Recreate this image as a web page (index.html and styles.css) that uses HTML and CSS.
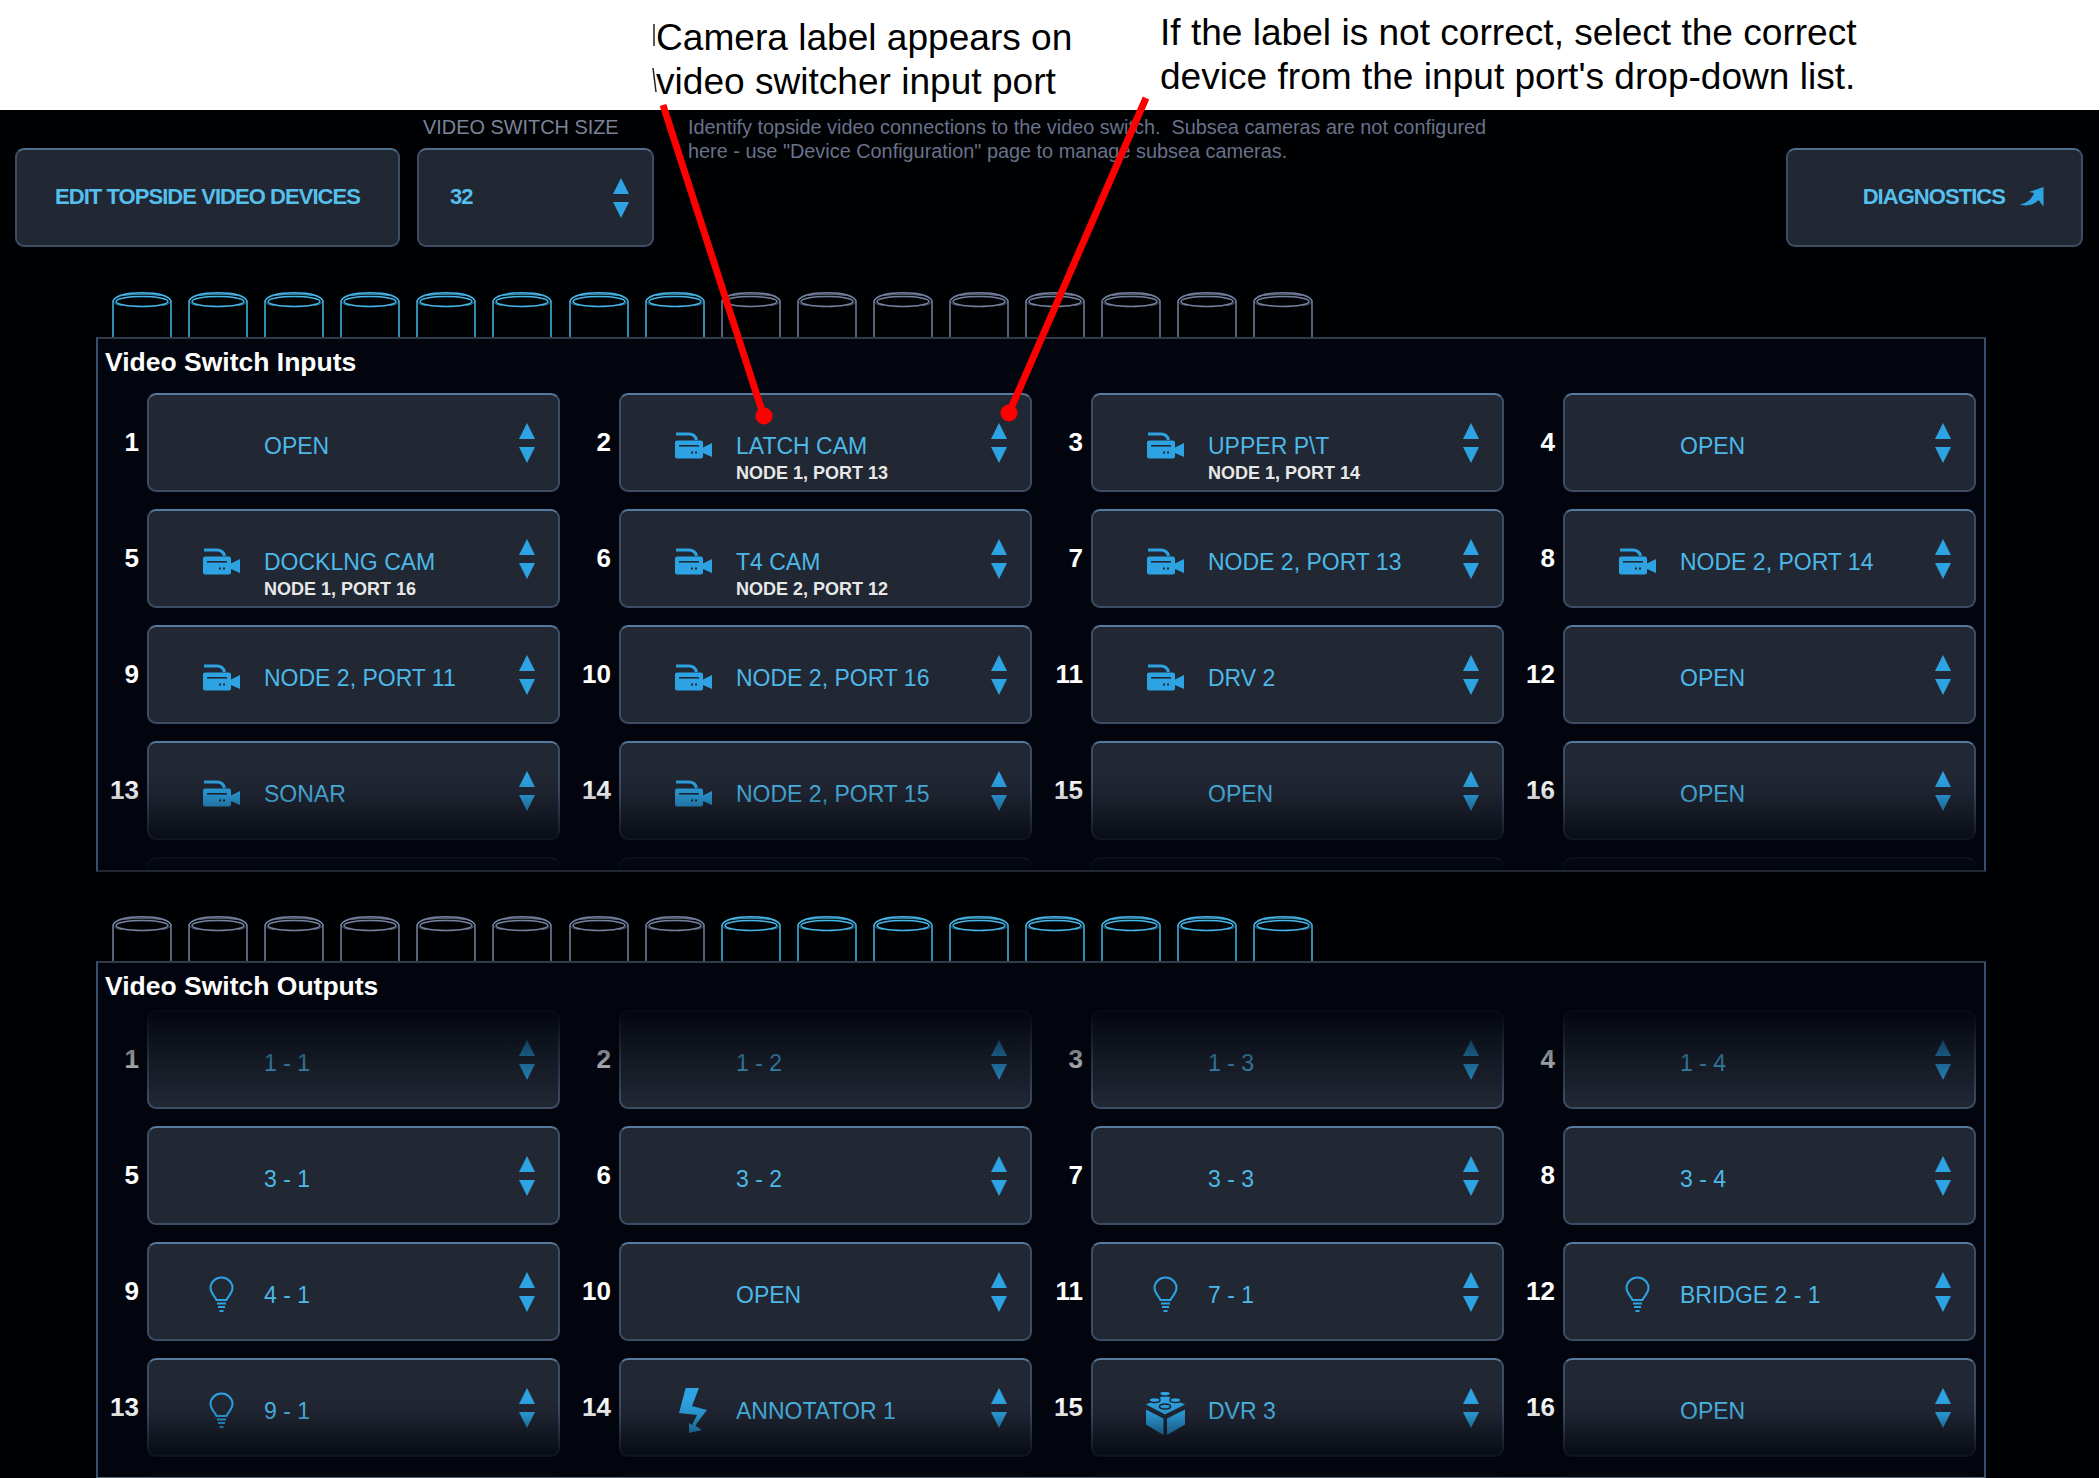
FILE: index.html
```html
<!DOCTYPE html>
<html lang="en">
<head>
<meta charset="utf-8">
<title>Video Switch</title>
<link rel="stylesheet" href="styles.css">
</head>
<body>
<svg class="defs" width="0" height="0" aria-hidden="true">
  <symbol id="cam" viewBox="0 0 37 27">
    <path d="M1 2H14Q20 2 21.5 8" fill="none" stroke="currentColor" stroke-width="3"/>
    <rect x="0" y="8.5" width="28" height="18" rx="2" fill="currentColor"/>
    <rect x="4" y="13" width="20" height="1.6" fill="#212733"/>
    <rect x="16" y="19.5" width="2" height="2" fill="#212733"/>
    <rect x="20" y="19.5" width="2" height="2" fill="#212733"/>
    <path d="M28 15.5L37 11V25L28 21Z" fill="currentColor"/>
  </symbol>
  <symbol id="bulb" viewBox="0 0 25 37">
    <path d="M12.5 1.5C6 1.5 1.5 6.500 1.500 12C1.500 17 5.500 19.500 7.500 24H17.500C19.500 19.500 23.500 17 23.500 12C23.500 6.500 19 1.500 12.500 1.500Z" fill="none" stroke="currentColor" stroke-width="2"/>
    <path d="M8 27.500H17M9 31H16M10.500 35H14.500" fill="none" stroke="currentColor" stroke-width="2"/>
  </symbol>
  <symbol id="bolt" viewBox="0 0 28 45">
    <path d="M6.700 0H20L13 18L28 22L18 35L16.700 38L23 42L10 45V35L13 37L18 27L0 25Z" fill="currentColor"/>
  </symbol>
  <symbol id="lego" viewBox="0 0 39 44">
    <path d="M0 13.500L19 4L39 13.500L19 23.500Z" fill="currentColor"/>
    <path d="M0 18.500L17.500 27.500V44L0 33.500ZM21 27.500L39 18.500V33.500L21 44Z" fill="currentColor"/>
    <g fill="currentColor" stroke="#1e2530" stroke-width="1.500">
      <ellipse cx="19" cy="2.500" rx="5.500" ry="2.500"/>
      <ellipse cx="8.500" cy="9" rx="5.500" ry="2.500"/>
      <ellipse cx="29.500" cy="9" rx="5.500" ry="2.500"/>
      <ellipse cx="19" cy="15.500" rx="5.500" ry="2.500"/>
    </g>
  </symbol>
  <symbol id="jump" viewBox="0 0 24 20">
    <path d="M23.500 0V19.500L18.500 13C15 17 8 20 0 17.500C7 16 12 12 14 6L9 5Z" fill="currentColor"/>
  </symbol>
  <symbol id="cyl" viewBox="0 0 60 45">
    <path d="M1 45V9C3 4 14 .8 30 .8S57 4 59 9V45" fill="none" stroke="currentColor" stroke-width="1.500"/>
    <path d="M11 3.500C20 1.800 40 1.800 49 3.500" fill="none" stroke="currentColor" stroke-width="1.500" opacity=".7"/>
    <ellipse cx="30" cy="9.500" rx="26" ry="5" fill="none" stroke="currentColor" stroke-width="1.500"/>
    <path d="M1 9C2 12 6 13 10 13.500" fill="none" stroke="currentColor" stroke-width="1" opacity=".7"/>
    <path d="M59 9C58 12 54 13 50 13.500" fill="none" stroke="currentColor" stroke-width="1" opacity=".7"/>
  </symbol>
</svg>

<div class="page">
  <header class="notes">
    <p class="note note-left">Camera label appears on<br>video switcher input port</p>
    <p class="note note-right">If the label is not correct, select the correct<br>device from the input port's drop-down list.</p>
  </header>

  <main class="dark">
    <section class="toolbar">
      <button class="btn btn-edit">EDIT TOPSIDE VIDEO DEVICES</button>
      <div class="size">
        <div class="size-label">VIDEO SWITCH SIZE</div>
        <div class="btn pick"><span>32</span><span class="arr"><i class="up"></i><i class="down"></i></span></div>
      </div>
      <p class="help">Identify topside video connections to the video switch.&nbsp; Subsea cameras are not configured<br>here - use "Device Configuration" page to manage subsea cameras.</p>
      <button class="btn btn-diag">DIAGNOSTICS<svg class="ic-jump"><use href="#jump"/></svg></button>
    </section>

    <div class="plugs">
      <svg class="plug on"><use href="#cyl"/></svg><svg class="plug on"><use href="#cyl"/></svg><svg class="plug on"><use href="#cyl"/></svg><svg class="plug on"><use href="#cyl"/></svg>
      <svg class="plug on"><use href="#cyl"/></svg><svg class="plug on"><use href="#cyl"/></svg><svg class="plug on"><use href="#cyl"/></svg><svg class="plug on"><use href="#cyl"/></svg>
      <svg class="plug"><use href="#cyl"/></svg><svg class="plug"><use href="#cyl"/></svg><svg class="plug"><use href="#cyl"/></svg><svg class="plug"><use href="#cyl"/></svg>
      <svg class="plug"><use href="#cyl"/></svg><svg class="plug"><use href="#cyl"/></svg><svg class="plug"><use href="#cyl"/></svg><svg class="plug"><use href="#cyl"/></svg>
    </div>

    <section class="panel panel-in">
      <h2 class="title">Video Switch Inputs</h2>
      <div class="ports">
        <div class="port"><b class="num">1</b><div class="sel"><span class="slot"></span><div class="txt"><div class="lbl">OPEN</div></div><span class="arr"><i class="up"></i><i class="down"></i></span></div></div>
        <div class="port"><b class="num">2</b><div class="sel"><span class="slot"><svg class="ic-cam"><use href="#cam"/></svg></span><div class="txt"><div class="lbl">LATCH CAM</div><div class="sub">NODE 1, PORT 13</div></div><span class="arr"><i class="up"></i><i class="down"></i></span></div></div>
        <div class="port"><b class="num">3</b><div class="sel"><span class="slot"><svg class="ic-cam"><use href="#cam"/></svg></span><div class="txt"><div class="lbl">UPPER P\T</div><div class="sub">NODE 1, PORT 14</div></div><span class="arr"><i class="up"></i><i class="down"></i></span></div></div>
        <div class="port"><b class="num">4</b><div class="sel"><span class="slot"></span><div class="txt"><div class="lbl">OPEN</div></div><span class="arr"><i class="up"></i><i class="down"></i></span></div></div>

        <div class="port"><b class="num">5</b><div class="sel"><span class="slot"><svg class="ic-cam"><use href="#cam"/></svg></span><div class="txt"><div class="lbl">DOCKLNG CAM</div><div class="sub">NODE 1, PORT 16</div></div><span class="arr"><i class="up"></i><i class="down"></i></span></div></div>
        <div class="port"><b class="num">6</b><div class="sel"><span class="slot"><svg class="ic-cam"><use href="#cam"/></svg></span><div class="txt"><div class="lbl">T4 CAM</div><div class="sub">NODE 2, PORT 12</div></div><span class="arr"><i class="up"></i><i class="down"></i></span></div></div>
        <div class="port"><b class="num">7</b><div class="sel"><span class="slot"><svg class="ic-cam"><use href="#cam"/></svg></span><div class="txt"><div class="lbl">NODE 2, PORT 13</div></div><span class="arr"><i class="up"></i><i class="down"></i></span></div></div>
        <div class="port"><b class="num">8</b><div class="sel"><span class="slot"><svg class="ic-cam"><use href="#cam"/></svg></span><div class="txt"><div class="lbl">NODE 2, PORT 14</div></div><span class="arr"><i class="up"></i><i class="down"></i></span></div></div>

        <div class="port"><b class="num">9</b><div class="sel"><span class="slot"><svg class="ic-cam"><use href="#cam"/></svg></span><div class="txt"><div class="lbl">NODE 2, PORT 11</div></div><span class="arr"><i class="up"></i><i class="down"></i></span></div></div>
        <div class="port"><b class="num">10</b><div class="sel"><span class="slot"><svg class="ic-cam"><use href="#cam"/></svg></span><div class="txt"><div class="lbl">NODE 2, PORT 16</div></div><span class="arr"><i class="up"></i><i class="down"></i></span></div></div>
        <div class="port"><b class="num">11</b><div class="sel"><span class="slot"><svg class="ic-cam"><use href="#cam"/></svg></span><div class="txt"><div class="lbl">DRV 2</div></div><span class="arr"><i class="up"></i><i class="down"></i></span></div></div>
        <div class="port"><b class="num">12</b><div class="sel"><span class="slot"></span><div class="txt"><div class="lbl">OPEN</div></div><span class="arr"><i class="up"></i><i class="down"></i></span></div></div>

        <div class="port"><b class="num">13</b><div class="sel"><span class="slot"><svg class="ic-cam"><use href="#cam"/></svg></span><div class="txt"><div class="lbl">SONAR</div></div><span class="arr"><i class="up"></i><i class="down"></i></span></div></div>
        <div class="port"><b class="num">14</b><div class="sel"><span class="slot"><svg class="ic-cam"><use href="#cam"/></svg></span><div class="txt"><div class="lbl">NODE 2, PORT 15</div></div><span class="arr"><i class="up"></i><i class="down"></i></span></div></div>
        <div class="port"><b class="num">15</b><div class="sel"><span class="slot"></span><div class="txt"><div class="lbl">OPEN</div></div><span class="arr"><i class="up"></i><i class="down"></i></span></div></div>
        <div class="port"><b class="num">16</b><div class="sel"><span class="slot"></span><div class="txt"><div class="lbl">OPEN</div></div><span class="arr"><i class="up"></i><i class="down"></i></span></div></div>

        <div class="port"><b class="num"></b><div class="sel"></div></div>
        <div class="port"><b class="num"></b><div class="sel"></div></div>
        <div class="port"><b class="num"></b><div class="sel"></div></div>
        <div class="port"><b class="num"></b><div class="sel"></div></div>
      </div>
    </section>

    <div class="plugs">
      <svg class="plug"><use href="#cyl"/></svg><svg class="plug"><use href="#cyl"/></svg><svg class="plug"><use href="#cyl"/></svg><svg class="plug"><use href="#cyl"/></svg>
      <svg class="plug"><use href="#cyl"/></svg><svg class="plug"><use href="#cyl"/></svg><svg class="plug"><use href="#cyl"/></svg><svg class="plug"><use href="#cyl"/></svg>
      <svg class="plug on"><use href="#cyl"/></svg><svg class="plug on"><use href="#cyl"/></svg><svg class="plug on"><use href="#cyl"/></svg><svg class="plug on"><use href="#cyl"/></svg>
      <svg class="plug on"><use href="#cyl"/></svg><svg class="plug on"><use href="#cyl"/></svg><svg class="plug on"><use href="#cyl"/></svg><svg class="plug on"><use href="#cyl"/></svg>
    </div>

    <section class="panel panel-out">
      <h2 class="title">Video Switch Outputs</h2>
      <div class="ports">
        <div class="port"><b class="num">1</b><div class="sel"><span class="slot"></span><div class="txt"><div class="lbl">1 - 1</div></div><span class="arr"><i class="up"></i><i class="down"></i></span></div></div>
        <div class="port"><b class="num">2</b><div class="sel"><span class="slot"></span><div class="txt"><div class="lbl">1 - 2</div></div><span class="arr"><i class="up"></i><i class="down"></i></span></div></div>
        <div class="port"><b class="num">3</b><div class="sel"><span class="slot"></span><div class="txt"><div class="lbl">1 - 3</div></div><span class="arr"><i class="up"></i><i class="down"></i></span></div></div>
        <div class="port"><b class="num">4</b><div class="sel"><span class="slot"></span><div class="txt"><div class="lbl">1 - 4</div></div><span class="arr"><i class="up"></i><i class="down"></i></span></div></div>

        <div class="port"><b class="num">5</b><div class="sel"><span class="slot"></span><div class="txt"><div class="lbl">3 - 1</div></div><span class="arr"><i class="up"></i><i class="down"></i></span></div></div>
        <div class="port"><b class="num">6</b><div class="sel"><span class="slot"></span><div class="txt"><div class="lbl">3 - 2</div></div><span class="arr"><i class="up"></i><i class="down"></i></span></div></div>
        <div class="port"><b class="num">7</b><div class="sel"><span class="slot"></span><div class="txt"><div class="lbl">3 - 3</div></div><span class="arr"><i class="up"></i><i class="down"></i></span></div></div>
        <div class="port"><b class="num">8</b><div class="sel"><span class="slot"></span><div class="txt"><div class="lbl">3 - 4</div></div><span class="arr"><i class="up"></i><i class="down"></i></span></div></div>

        <div class="port"><b class="num">9</b><div class="sel"><span class="slot"><svg class="ic-bulb"><use href="#bulb"/></svg></span><div class="txt"><div class="lbl">4 - 1</div></div><span class="arr"><i class="up"></i><i class="down"></i></span></div></div>
        <div class="port"><b class="num">10</b><div class="sel"><span class="slot"></span><div class="txt"><div class="lbl">OPEN</div></div><span class="arr"><i class="up"></i><i class="down"></i></span></div></div>
        <div class="port"><b class="num">11</b><div class="sel"><span class="slot"><svg class="ic-bulb"><use href="#bulb"/></svg></span><div class="txt"><div class="lbl">7 - 1</div></div><span class="arr"><i class="up"></i><i class="down"></i></span></div></div>
        <div class="port"><b class="num">12</b><div class="sel"><span class="slot"><svg class="ic-bulb"><use href="#bulb"/></svg></span><div class="txt"><div class="lbl">BRIDGE 2 - 1</div></div><span class="arr"><i class="up"></i><i class="down"></i></span></div></div>

        <div class="port"><b class="num">13</b><div class="sel"><span class="slot"><svg class="ic-bulb"><use href="#bulb"/></svg></span><div class="txt"><div class="lbl">9 - 1</div></div><span class="arr"><i class="up"></i><i class="down"></i></span></div></div>
        <div class="port"><b class="num">14</b><div class="sel"><span class="slot"><svg class="ic-bolt"><use href="#bolt"/></svg></span><div class="txt"><div class="lbl">ANNOTATOR 1</div></div><span class="arr"><i class="up"></i><i class="down"></i></span></div></div>
        <div class="port"><b class="num">15</b><div class="sel"><span class="slot"><svg class="ic-lego"><use href="#lego"/></svg></span><div class="txt"><div class="lbl">DVR 3</div></div><span class="arr"><i class="up"></i><i class="down"></i></span></div></div>
        <div class="port"><b class="num">16</b><div class="sel"><span class="slot"></span><div class="txt"><div class="lbl">OPEN</div></div><span class="arr"><i class="up"></i><i class="down"></i></span></div></div>

        <div class="port"><b class="num"></b><div class="sel"></div></div>
        <div class="port"><b class="num"></b><div class="sel"></div></div>
        <div class="port"><b class="num"></b><div class="sel"></div></div>
        <div class="port"><b class="num"></b><div class="sel"></div></div>
      </div>
    </section>
  </main>

  <svg class="callouts" viewBox="0 0 2100 1478" aria-hidden="true">
    <path class="tick" d="M654 24V46M653 68L656 92"/>
    <path class="pointer" d="M663 105L764 417M1146 98L1009 413"/>
    <circle class="dot" cx="764" cy="416" r="8.500"/>
    <circle class="dot" cx="1009" cy="413" r="8.500"/>
  </svg>
</div>
</body>
</html>
```

FILE: styles.css
```css
* { box-sizing: border-box; }
html, body { margin: 0; padding: 0; background: #fff; }
body { font-family: "Liberation Sans", Arial, sans-serif; }
.defs { position: absolute; }

.page { position: relative; width: 2100px; height: 1478px; overflow: hidden; }

.notes { display: flex; height: 110px; padding-left: 656px; background: #fff; color: #000; }
.note { margin: 0; font-size: 37.1px; line-height: 44px; white-space: nowrap; }
.note-left { width: 504px; padding-top: 15px; }
.note-right { padding-top: 10px; }

.dark { height: 1368px; margin-right: 1px; background: #000103; overflow: hidden; }

.toolbar { display: flex; align-items: flex-start; height: 137px; padding-left: 15px; }
.btn {
  display: flex; align-items: center; height: 99px; padding: 0 0 2px;
  background: #212733; border: 2px solid #3d4d66; border-top-color: #4f6d8d; border-radius: 9px;
  color: #55c0ee; font: bold 22px "Liberation Sans", Arial, sans-serif; letter-spacing: -.95px;
}
.btn-edit { width: 385px; margin-top: 38px; justify-content: center; }
.size { width: 237px; margin-left: 17px; }
.size-label { height: 38px; padding: 5px 0 0 6px; font-size: 19.9px; line-height: 24px; color: #7b8499; white-space: nowrap; }
.pick { padding-left: 31px; }
.help { margin: 5px 0 0 34px; font-size: 19.87px; line-height: 24px; color: #69728a; white-space: nowrap; }
.btn-diag { width: 297px; margin: 38px 16px 0 auto; justify-content: flex-end; padding-right: 37px; }
.ic-jump { width: 24px; height: 20px; margin-left: 15px; color: #2ea3e3; }

.plugs { display: flex; gap: 16.1px; height: 45px; margin-top: 45px; padding-left: 112px; }
.panel-in + .plugs { margin-top: 44px; }
.plug { display: block; width: 60px; height: 45px; color: #7482a0; }
.plug.on { color: #45b7e8; }

.panel {
  position: relative; width: 1890px; margin-left: 96px; overflow: hidden;
  background: #02050e; border: 2px solid #34506e; border-top-color: #2f3a4b; border-bottom: 2px solid #1f2735;
}
.panel-in { height: 535px; }
.panel-out { height: 517px; border-bottom: 1px solid #5b6673; }
.panel::after {
  content: ""; position: absolute; left: 0; right: 0; bottom: 0; height: 96px; pointer-events: none;
  background: linear-gradient(to bottom, rgba(2,5,14,0), rgba(2,5,14,.12) 20%, rgba(2,5,14,.75) 66%, rgba(2,5,14,.97));
}
.panel-out::after { height: 78px; }
.panel-out::before {
  content: ""; position: absolute; left: 0; right: 0; top: 45px; height: 97px; z-index: 1; pointer-events: none;
  background: linear-gradient(to bottom, rgba(2,5,14,.98), rgba(2,5,14,.42) 54%, rgba(2,5,14,0));
}

.title { margin: 0; padding: 8px 0 16px 7px; font-size: 26.5px; line-height: 30px; font-weight: bold; color: #fff; }
.panel-out .title { padding-bottom: 9px; }

.ports { display: grid; grid-template-columns: repeat(4, 462px); column-gap: 10px; row-gap: 17px; }
.port { display: flex; align-items: center; gap: 8px; }
.num { width: 41px; margin-bottom: 2px; text-align: right; font-size: 26px; line-height: 30px; font-weight: bold; color: #fff; }
.sel {
  display: flex; align-items: flex-start; width: 413px; height: 99px;
  background: #212733; border: 2px solid #3d4d66; border-top-color: #557a9e; border-radius: 9px;
}
.slot { display: block; flex: none; width: 115px; height: 94px; }
.slot svg { display: block; color: #2ea3e3; }
.ic-cam { width: 37px; height: 27px; margin: 37px 0 0 54px; }
.ic-bulb { width: 25px; height: 37px; margin: 32px 0 0 60px; }
.ic-bolt { width: 28px; height: 45px; margin: 28px 0 0 58px; }
.ic-lego { width: 39px; height: 44px; margin: 31px 0 0 53px; }

.txt { padding-top: 38px; white-space: nowrap; }
.lbl { font-size: 23px; line-height: 26px; color: #4db8e8; }
.sub { margin-top: 3px; font-size: 18px; line-height: 22px; font-weight: bold; color: #e8e8e8; }

.arr { display: block; flex: none; width: 17px; margin: 0 22px 0 auto; align-self: center; }
.arr i { display: block; width: 0; height: 0; border-left: 8.5px solid transparent; border-right: 8.5px solid transparent; }
.arr .up { border-bottom: 16px solid #2ea3e3; margin-bottom: 8px; }
.arr .down { border-top: 16px solid #2ea3e3; }
.pick .arr { margin-top: 2px; }

.callouts { position: absolute; left: 0; top: 0; width: 2100px; height: 1478px; pointer-events: none; }
.pointer { fill: none; stroke: #f00; stroke-width: 7; }
.dot { fill: #f00; }
.tick { fill: none; stroke: #222; stroke-width: 1.500; }
```
